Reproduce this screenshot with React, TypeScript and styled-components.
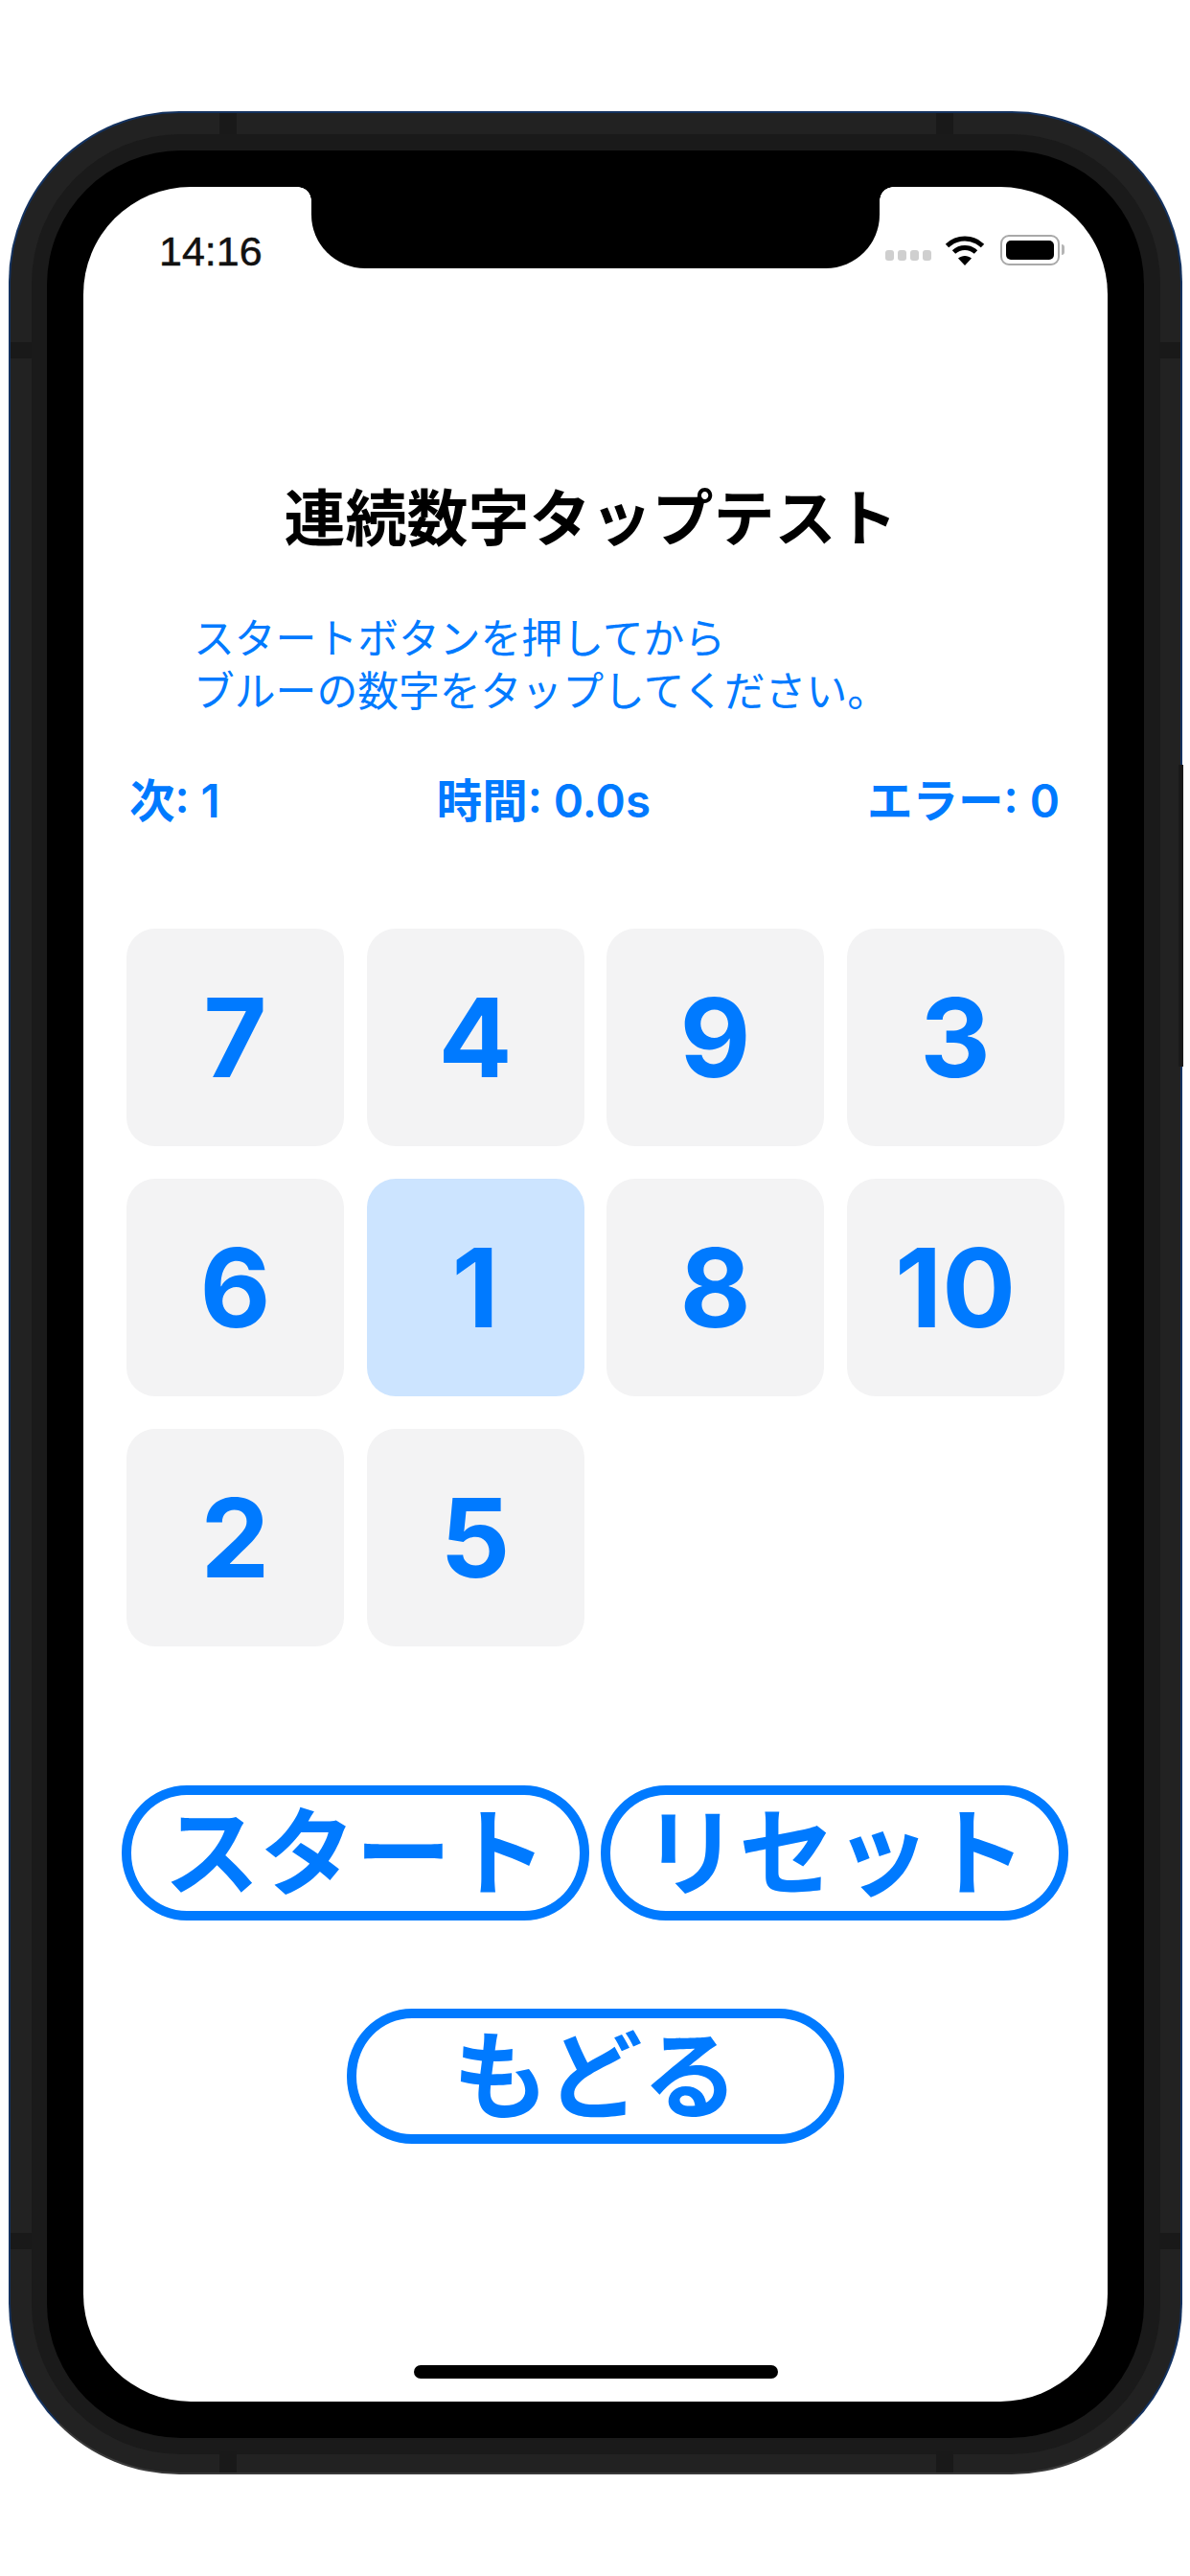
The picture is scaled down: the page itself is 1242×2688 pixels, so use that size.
import React from "react";
import styled, { createGlobalStyle } from "styled-components";

const BLUE = "#007aff";
const SANS = `"Inter", "Noto Sans CJK JP", sans-serif`;

const GlobalStyle = createGlobalStyle`
  html, body {
    margin: 0;
    padding: 0;
    background: #fff;
    font-family: ${SANS};
  }
`;

const Page = styled.div`
  width: 1242px;
  height: 2688px;
  padding: 116px 0 0 9px;
  box-sizing: border-box;
  overflow: hidden;
`;

const Phone = styled.div`
  position: relative;
  width: 1225px;
  height: 2466px;
  box-sizing: border-box;
  padding: 22px 21px 19px 22px;
  background: #222;
  border-radius: 178px;
  border: 2px solid #14325f;
  border-bottom-color: #3a3a3a;
`;

const Band = styled.div`
  height: 100%;
  box-sizing: border-box;
  padding: 17px 17px 17px 16px;
  background: #1a1a1a;
  border-radius: 156px;
`;

const Bezel = styled.div`
  height: 100%;
  box-sizing: border-box;
  padding: 38px;
  background: #000;
  border-radius: 140px;
`;

const Screen = styled.div`
  height: 100%;
  display: flex;
  flex-direction: column;
  background: #fff;
  border-radius: 112px;
  overflow: hidden;
`;

/* darker cuts in the metal rim */
const Cut = styled.span<{ $side: "top" | "bottom" | "left" | "right"; $at: number }>`
  position: absolute;
  background: #191919;
  ${({ $side, $at }) =>
    $side === "top" || $side === "bottom"
      ? `${$side}: 0; left: ${$at}px; width: 18px; height: 22px;`
      : `${$side}: 0; top: ${$at}px; width: 22px; height: 17px;`}
`;

const SideButton = styled.span`
  position: absolute;
  right: -3px;
  top: 680px;
  width: 5px;
  height: 315px;
  background: #1a1a1a;
`;

const StatusBar = styled.div`
  height: 85px;
  flex: none;
  display: flex;
  align-items: flex-start;
`;

const Time = styled.div`
  width: 238px;
  padding: 42px 0 0 79px;
  box-sizing: border-box;
  font-family: "Liberation Sans", sans-serif;
  font-size: 43px;
  line-height: 50px;
  color: #111;
  -webkit-text-stroke: 0.5px #111;
`;

const Notch = styled.div`
  position: relative;
  width: 593px;
  height: 85px;
  flex: none;
  background: #000;
  border-radius: 0 0 56px 56px;

  &::before,
  &::after {
    content: "";
    position: absolute;
    top: 0;
    width: 14px;
    height: 14px;
  }
  &::before {
    left: -14px;
    background: radial-gradient(circle at 0 100%, transparent 13.5px, #000 14px);
  }
  &::after {
    right: -14px;
    background: radial-gradient(circle at 100% 100%, transparent 13.5px, #000 14px);
  }
`;

const StatusIcons = styled.div`
  display: flex;
  align-items: flex-start;
  padding: 50px 0 0 6px;
`;

const Dots = styled.div`
  display: flex;
  gap: 4px;
  margin-top: 16px;
  margin-right: 14px;
`;

const Dot = styled.span`
  width: 9px;
  height: 11px;
  border-radius: 3px;
  background: #cfcfcf;
`;

const Battery = styled.div`
  position: relative;
  width: 62px;
  height: 32px;
  box-sizing: border-box;
  margin-left: 16px;
  padding: 4px;
  border: 2px solid #a9a9a9;
  border-radius: 9px;

  &::before {
    content: "";
    display: block;
    height: 100%;
    background: #000;
    border-radius: 5px;
  }
  &::after {
    content: "";
    position: absolute;
    right: -7px;
    top: 8px;
    width: 3px;
    height: 11px;
    background: #b5b5b5;
    border-radius: 0 3px 3px 0;
  }
`;

const Title = styled.h1`
  margin: 226px 0 0;
  padding-right: 10px;
  font-size: 64px;
  line-height: 70px;
  font-weight: 700;
  text-align: center;
  color: #000;
`;

const Hint = styled.p`
  margin: 63px 0 0;
  padding-left: 115px;
  font-size: 42.8px;
  line-height: 55px;
  color: ${BLUE};
`;

const Stats = styled.div`
  margin-top: 57px;
  padding: 0 50px 0 48px;
  display: flex;
  justify-content: space-between;
  font-size: 47.5px;
  line-height: 60px;
  font-weight: 600;
  color: ${BLUE};
`;

const Grid = styled.div`
  margin-top: 103px;
  padding-left: 45px;
  display: grid;
  grid-template-columns: repeat(4, 227px);
  grid-auto-rows: 227px;
  column-gap: 23.5px;
  row-gap: 34px;
`;

const Tile = styled.div<{ $active?: boolean }>`
  display: flex;
  align-items: center;
  justify-content: center;
  border-radius: 30px;
  background: ${({ $active }) => ($active ? "#cce4ff" : "#f3f3f4")};
  font-size: 114px;
  font-weight: 700;
  color: ${BLUE};
`;

const ButtonRow = styled.div`
  margin-top: 145px;
  padding-left: 40px;
  display: flex;
  gap: 12px;
`;

const PillButton = styled.div<{ $width: number }>`
  width: ${({ $width }) => $width}px;
  height: 141px;
  box-sizing: border-box;
  display: flex;
  align-items: center;
  justify-content: center;
  border: 10px solid ${BLUE};
  border-radius: 68px / 70px;
  font-size: 100px;
  line-height: 1;
  font-weight: 700;
  white-space: nowrap;
  color: ${BLUE};
`;

const BackRow = styled.div`
  margin-top: 92px;
  display: flex;
  justify-content: center;
`;

const HomeBar = styled.div`
  width: 380px;
  height: 14px;
  flex: none;
  margin: auto auto 24px;
  border-radius: 7px;
  background: #000;
`;

const NUMBERS = [7, 4, 9, 3, 6, 1, 8, 10, 2, 5];

function WifiIcon() {
  return (
    <svg width="42" height="32" viewBox="0 0 42 32" fill="none">
      <path d="M2.5 11.5C13 1.5 29 1.5 39.5 11.5" stroke="#000" strokeWidth="5" />
      <path d="M9.5 18C16 12 26 12 32.5 18" stroke="#000" strokeWidth="5" />
      <path d="M21 32L14 24.5C18 21 24 21 28 24.5Z" fill="#000" />
    </svg>
  );
}

export default function App() {
  return (
    <Page>
      <GlobalStyle />
      <Phone>
        <Cut $side="top" $at={218} />
        <Cut $side="top" $at={966} />
        <Cut $side="bottom" $at={218} />
        <Cut $side="bottom" $at={966} />
        <Cut $side="left" $at={239} />
        <Cut $side="right" $at={239} />
        <Cut $side="left" $at={2212} />
        <Cut $side="right" $at={2212} />
        <SideButton />
        <Band>
          <Bezel>
            <Screen>
              <StatusBar>
                <Time>14:16</Time>
                <Notch />
                <StatusIcons>
                  <Dots>
                    <Dot />
                    <Dot />
                    <Dot />
                    <Dot />
                  </Dots>
                  <WifiIcon />
                  <Battery />
                </StatusIcons>
              </StatusBar>
              <Title>連続数字タップテスト</Title>
              <Hint>
                スタートボタンを押してから
                <br />
                ブルーの数字をタップしてください。
              </Hint>
              <Stats>
                <span>次: 1</span>
                <span>時間: 0.0s</span>
                <span>エラー: 0</span>
              </Stats>
              <Grid>
                {NUMBERS.map((n) => (
                  <Tile key={n} $active={n === 1}>
                    {n}
                  </Tile>
                ))}
              </Grid>
              <ButtonRow>
                <PillButton $width={488}>スタート</PillButton>
                <PillButton $width={488}>リセット</PillButton>
              </ButtonRow>
              <BackRow>
                <PillButton $width={519}>もどる</PillButton>
              </BackRow>
              <HomeBar />
            </Screen>
          </Bezel>
        </Band>
      </Phone>
    </Page>
  );
}
